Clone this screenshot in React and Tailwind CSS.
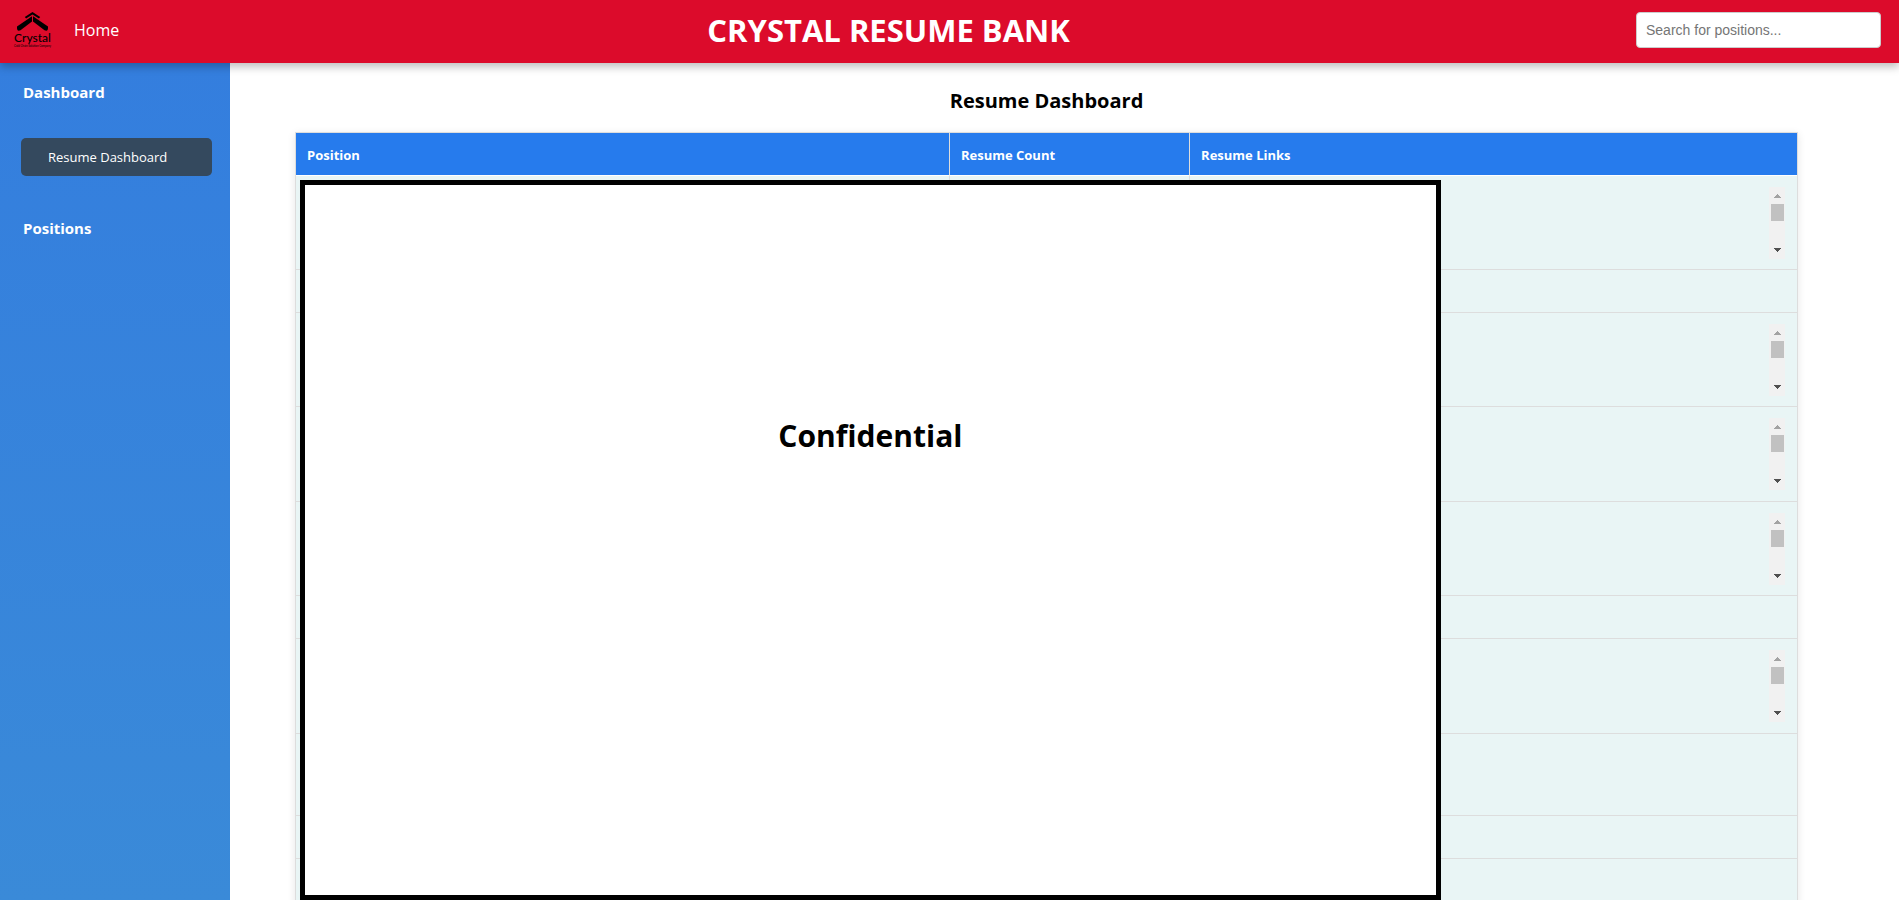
const rows = [
  { height: "h-[94px]", scroll: true },
  { height: "h-[43px]" },
  { height: "h-[94px]", scroll: true },
  { height: "h-[95px]", scroll: true },
  { height: "h-[94px]", scroll: true },
  { height: "h-[43px]" },
  { height: "h-[95px]", scroll: true },
  { height: "h-[82px]" },
  { height: "h-[43px]" },
  { height: "h-[94px]" },
];

function Logo() {
  return (
    <svg viewBox="0 0 40 40" className="size-10" role="img" aria-label="Crystal">
      <path d="M12.800 7 L20.500 2 L28.200 7 L26.900 8.400 L20.500 4.400 L14.100 8.400 Z" fill="#000" />
      <path d="M20 6.200 V11.400 L8.500 20.300 Q5 22 5 17.800 V16.400 Z" fill="#000" />
      <path d="M21 6.200 V11.400 L32.500 20.300 Q36 22 36 17.800 V16.400 Z" fill="#000" />
      <text x="20.500" y="31.500" textAnchor="middle" fontFamily="Lato, sans-serif" fontSize="12" fontWeight="500">
        Crystal
      </text>
      <text x="20.500" y="37" textAnchor="middle" fontFamily="Lato, sans-serif" fontSize="2.800" fontWeight="500">
        Cold Chain Solution Company
      </text>
    </svg>
  );
}

function ScrollBar() {
  return (
    <div className="ml-auto flex h-[72px] w-4 flex-col items-center bg-[#f1f1f1]">
      <svg viewBox="0 0 7 4" className="mt-[7px] h-1 w-[7px]" shapeRendering="crispEdges" aria-hidden="true">
        <path d="M3 0h1v1h1v1h1v1h1v1H0V3h1V2h1V1h1z" fill="#a3a3a3" />
      </svg>
      <div className="mt-1.5 h-[17px] w-[13px] bg-[#c1c1c1]" />
      <svg viewBox="0 0 7 4" className="mt-auto mb-[7px] h-1 w-[7px]" shapeRendering="crispEdges" aria-hidden="true">
        <path d="M0 0h7v1H6v1H5v1H4v1H3V3H2V2H1V1H0z" fill="#505050" />
      </svg>
    </div>
  );
}

export default function App() {
  return (
    <div className="flex h-screen flex-col overflow-hidden bg-white font-['Open_Sans','Noto_Sans',sans-serif] text-black">
      <header className="relative z-10 flex h-[63px] shrink-0 items-center justify-between bg-[#dc0b2b] pr-[18px] pb-[3px] pl-3 shadow-[0_4px_8px_rgba(0,0,0,0.25)]">
        <nav className="flex items-center">
          <Logo />
          <a href="#home" className="px-[22px] text-base leading-6 text-white">
            Home
          </a>
        </nav>
        <h1 className="text-[31px] leading-10 font-bold text-white">CRYSTAL RESUME BANK</h1>
        <input
          type="search"
          aria-label="Search for positions"
          placeholder="Search for positions..."
          className="h-9 w-[245px] rounded border border-[#ccc] bg-white px-[9px] font-['Liberation_Sans',sans-serif] text-sm placeholder:text-[#757575]"
        />
      </header>

      <div className="flex min-h-0 flex-1">
        <aside className="w-[230px] shrink-0 bg-linear-to-b from-[#347ede] to-[#3a8ad8] pt-[17px] pr-[18px] pl-[21px] text-white">
          <h2 className="pl-0.5 text-[15px] leading-6 font-bold">Dashboard</h2>
          <a
            href="#resume-dashboard"
            className="mt-[34px] flex h-[38px] items-center rounded-[5px] bg-[#34495e] pt-0.5 pl-[27px] text-[13px]"
          >
            Resume Dashboard
          </a>
          <h2 className="mt-10 pl-0.5 text-[15px] leading-6 font-bold">Positions</h2>
        </aside>

        <main className="flex min-w-0 flex-1 flex-col pr-[101px] pl-[65px]">
          <h2 className="pt-6 pb-[17px] text-center text-xl leading-7 font-bold">Resume Dashboard</h2>
          <div className="relative min-h-0 flex-1">
            <table className="w-full table-fixed border-separate border-spacing-0 border border-[#ddd] text-left text-[13px] shadow-[0_2px_8px_rgba(0,0,0,0.1)]">
              <thead>
                <tr className="h-[43px] bg-[#267bed] text-white">
                  <th className="w-[43.5%] border-b border-white px-[11px] pt-1 pb-0 font-bold">Position</th>
                  <th className="w-[16%] border-b border-l border-b-white border-l-[#ddd] px-[11px] pt-1 pb-0 font-bold">
                    Resume Count
                  </th>
                  <th className="border-b border-l border-b-white border-l-[#ddd] px-[11px] pt-1 pb-0 font-bold">
                    Resume Links
                  </th>
                </tr>
              </thead>
              <tbody>
                {rows.map((row, i) => (
                  <tr key={i} className={`${row.height} bg-[#e9f5f5]`}>
                    <td className="border-b border-[#ddd]" />
                    <td className="border-b border-l border-[#ddd]" />
                    <td className="border-b border-l border-[#ddd] py-0 pr-3 align-middle">
                      {row.scroll && <ScrollBar />}
                    </td>
                  </tr>
                ))}
              </tbody>
            </table>
            <div className="absolute top-12 bottom-0 left-[5px] w-[75.9%] border-[5px] border-black bg-white pt-[229px] text-center text-[30px] leading-[44px] font-bold">
              Confidential
            </div>
          </div>
        </main>
      </div>
    </div>
  );
}
